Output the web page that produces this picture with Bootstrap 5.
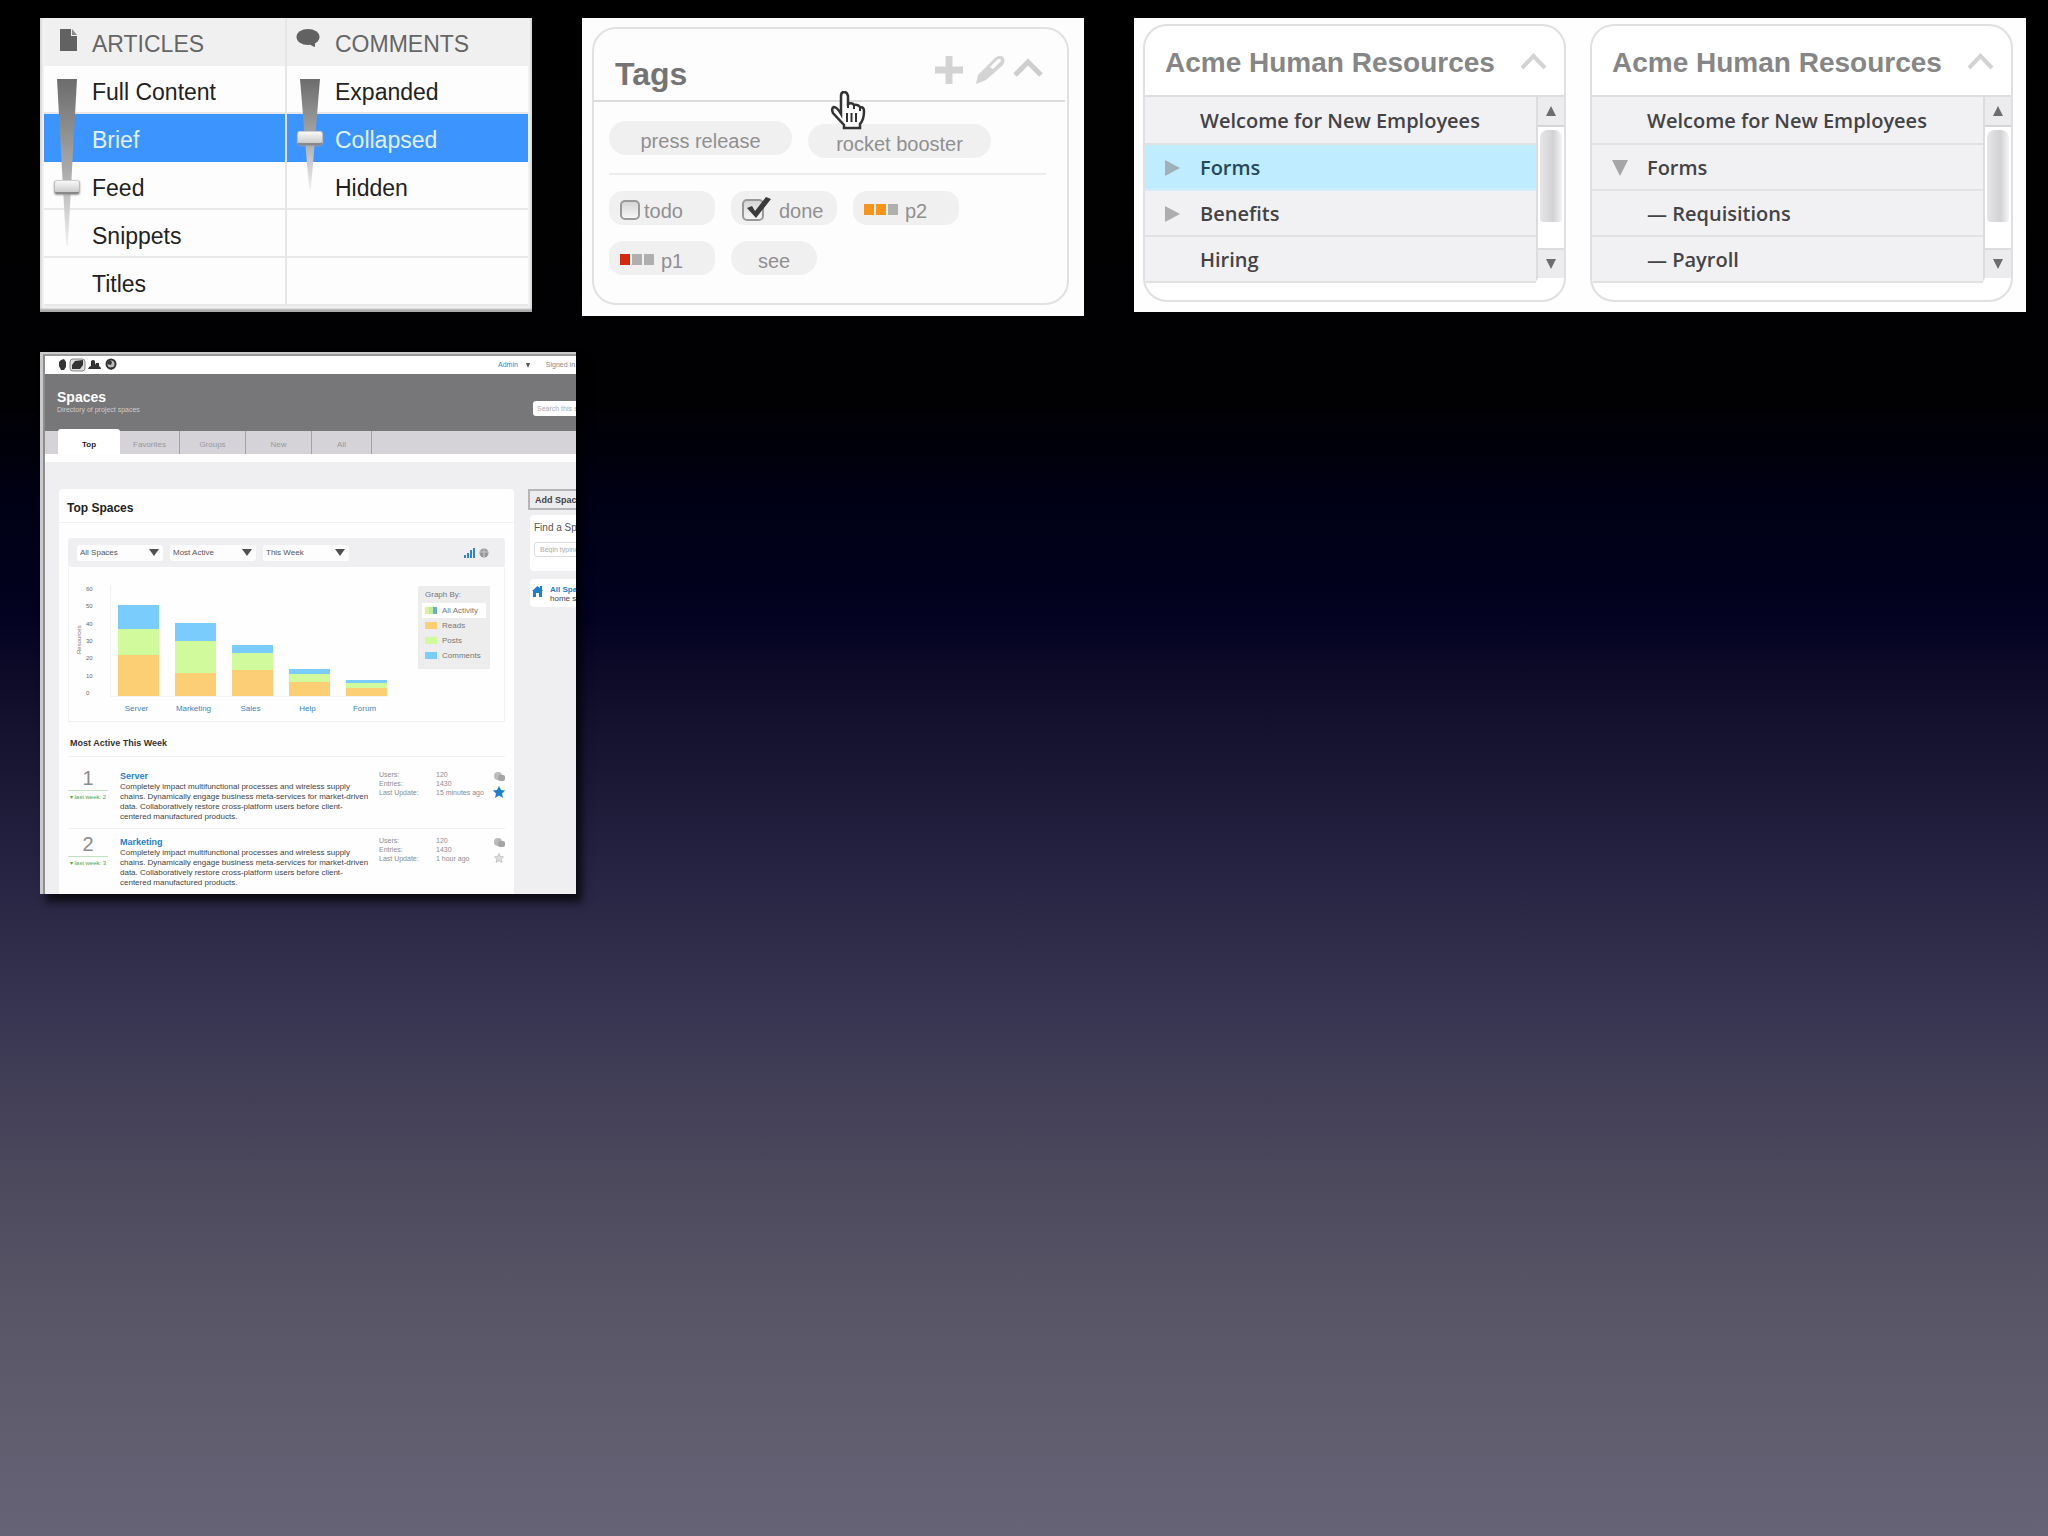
<!DOCTYPE html>
<html lang="en">
<head>
<meta charset="utf-8">
<meta name="viewport" content="width=device-width, initial-scale=1">
<title>Interface components</title>
<link href="https://cdn.jsdelivr.net/npm/bootstrap@5.3.0/dist/css/bootstrap.min.css" rel="stylesheet">
<style>
body{min-height:100vh;font-family:"Liberation Sans",Arial,sans-serif;
 background:linear-gradient(#000 0,#010103 26%,#000016 33%,#030220 40%,#120f2c 46%,#242240 56%,#383552 66%,#4b485c 76%,#595767 86%,#656375 100%) no-repeat}
button{font-family:inherit}
.board{padding:18px 22px 24px 40px}
.top-row{display:grid;grid-template-columns:492fr 502fr 892fr;gap:50px;align-items:start}
.pane-a{height:294px;background:#f1f1f1;padding:0 4px 6px;box-shadow:inset 0 -4px 2px -1px #aaa,inset 2px 0 1px #ddd,inset -2px 0 1px #ddd}
.pane-b{background:#fefdfe;padding:9px 15px 11px 10px}
.pane-c{height:294px;background:#fefefe;padding:6px 13px 10px 9px;gap:24px}

/* density picker */
.picker{flex:1 1 0;position:relative;background:#fdfdfd}
.picker + .picker{border-left:2px solid #e6e5e8}
.picker-head,.picker .opt{height:48px;padding:4px 0 0 48px;font-size:23px;line-height:44px;text-align:left;white-space:nowrap}
.picker-head{position:relative;background:#f0f0f0;color:#666;margin:0;font-weight:400}
.picker-head svg{position:absolute;left:15px;top:10px}
.picker-head .bubble{left:9px}
.picker .opt{display:block;width:100%;border:0;border-bottom:2px solid #e8e8ea;background:#fdfdfd;color:#222;border-radius:0}
.picker .opt.active{background:#3c95ff;color:#e2f1ff;border-color:#3c95ff}
.slider-box{position:absolute;left:10px;top:61px;width:27px;height:167px}
.slider-box.is-short{height:111px}
.slider-box::before{content:"";position:absolute;left:3px;top:0;width:20px;height:100%;background:linear-gradient(#6c6c6c,#aaa 55%,#f2f2f2);clip-path:polygon(0 0,100% 0,54% 100%,46% 100%)}
.slider-box input{appearance:none;-webkit-appearance:none;position:absolute;left:27px;top:0;margin:0;width:167px;height:27px;background:transparent;transform:rotate(90deg);transform-origin:0 0}
.slider-box.is-short input{width:111px}
.slider-box input::-webkit-slider-thumb{-webkit-appearance:none;width:14px;height:26px;border-radius:3px;border:1px solid #bbb;border-left-color:#ccc;border-right:2px solid #888;background:linear-gradient(90deg,#f8f8f8,#ccc);box-shadow:1px 0 2px #999}

/* tag box */
.tagbox{position:relative;height:278px;border:2px solid #e2e1e2;border-radius:24px;padding-right:2px}
.tagbox-head{height:73px;border-bottom:2px solid #dddcdd;padding:0 22px 0 21px}
.tagbox-head h2{font-size:32px;line-height:40px;font-weight:700;color:#757475;margin:25px 0 0}
.tools{padding-top:10px}
.tool{border:0;background:none;padding:0;line-height:0}
.tag-body{padding:19px 19px 0 15px}
.tag-row{gap:16px}
.tag{height:34px;border:0;border-radius:14px;background:#f1f0f1;color:#908f90;font-size:20px;line-height:24px;padding:6px 0 0;white-space:nowrap;display:flex;align-items:center}
.tag-wide{width:183px;border-radius:17px;justify-content:center}
.tag-drop{margin-top:3px;padding-top:5px}
.tag-mid{width:106px;padding-left:11px}
.tag-see{width:86px;border-radius:17px;justify-content:center}
.tag-body hr{margin:15px 0 16px;border:0;border-top:2px solid #eeebed;opacity:1}
.tick{appearance:none;-webkit-appearance:none;width:20px;height:20px;margin:0 4px 2px 0;border:2px solid #9a999a;border-radius:5px;background:linear-gradient(#d5d5d5,#f6f6f6)}
.tick-on{position:relative;width:30px;height:28px;margin:0 7px 6px 0;flex:none}
.tick-on .tick{position:absolute;left:0;top:5px;margin:0;width:22px;height:22px}
.tick-on svg{position:absolute;left:0;top:0;pointer-events:none}
.pips{display:flex;gap:2px;margin-right:7px;margin-bottom:4px}
.pips i{width:10px;height:11px;background:#b0afb0}
.pips .amber{background:#f7941d}
.pips .red{background:#d4290f}
.hand{position:absolute;left:236px;top:62px}

/* resource lists */
.hr-card{flex:1 1 0;height:278px;border:2px solid #e0dfe1;border-radius:24px;overflow:hidden;background:#fff}
.hr-head{height:71px;border-bottom:2px solid #dedde0;padding:0 17px 0 20px}
.hr-head h2{font-size:28px;line-height:34px;font-weight:700;color:#868686;margin:5px 0 0;white-space:nowrap}
.hr-list{flex:1 1 auto;border-radius:0 0 6px 0;border-right:2px solid #dcdbde}
.hr-list a{height:46px;border-bottom:2px solid #e2e1e4;background:#f1f0f2;color:#444346;font:600 20px/44px "Open Sans","Noto Sans",sans-serif;padding:1px 0 0 20px;text-decoration:none;white-space:nowrap;display:flex;align-items:center}
.hr-list a:first-child{height:48px;padding-top:2px}
.hr-list a.on{background:#bfecff;color:#26495a;border-color:#d3eefa}
.caret{width:16px;flex:none;margin-right:19px;line-height:0}
.scrollbar{width:26px;height:181px;background:#f2f1f3;display:flex;flex-direction:column}
.scrollbar button{border:0;background:#ecebed;height:28px;padding:0;line-height:0}
.scrollbar .groove{flex:1;background:#fff;padding:3px 2px 0;border-top:2px solid #d5d4d7;border-bottom:2px solid #dcdbde}
.scrollbar .grip{height:92px;border-radius:8px 8px 4px 4px;background:linear-gradient(90deg,#e6e5e7,#d2d1d4 60%,#f4f4f5)}

/* spaces application window */
.win{width:100%;max-width:536px;height:542px;margin-top:36px;background:#efeef1;border-left:3px solid #c9c9c9;border-top:2px solid #ccc;overflow:hidden;box-shadow:6px 8px 8px rgba(0,0,0,.7)}
.win-in{border-left:2px solid #8e8e90;border-top:2px solid #999;height:100%}
.bar-top{height:18px;background:#fff;padding-left:13px;font-size:7px;white-space:nowrap;color:#888;position:relative}
.bar-top .account{position:absolute;left:453px;top:0;height:18px;gap:8px}
.bar-top a{color:#1e88d8;text-decoration:none}
.hero{height:57px;background:#777678;color:#fff;padding:15px 0 0 12px}
.hero h1{font-size:14px;line-height:16px;font-weight:700;margin:0}
.hero p{font-size:7px;line-height:10px;margin:0;color:#ccc}
.hero input{width:43px;height:15px;margin-top:12px;border:0;border-radius:3px 0 0 3px;font-size:7px;padding:0 0 0 4px;background:#fff}
input::placeholder{color:#aaa}
.tabs{height:31px;background:linear-gradient(#d5d3d8 23px,#fdfdff 23px);padding-left:13px}
.tabs a{height:23px;font-size:8px;color:#98979b;text-decoration:none;display:flex;align-items:center;justify-content:center;padding-top:5px;width:66px;border-right:1px solid #a3a2a6}
.tabs a.on{margin-top:-2px;height:25px;width:62px;background:#fff;border:0;border-radius:3px 3px 0 0;color:#222;font-weight:700;padding-top:7px}
.tabs a.short{width:60px}
.cols{padding:27px 0 0 14px;gap:14px}
.sheet{flex:1 1 0;background:#fefefe;border-radius:4px 4px 0 0;min-width:0;padding:0 9px;height:440px}
.sheet h2{font-size:12px;line-height:14px;font-weight:700;color:#222;margin:0 -9px;padding:12px 0 7px 8px;border-bottom:1px solid #f1f1f4}
.filters{height:29px;margin-top:15px;background:#efeff1;border-radius:3px;padding:0 16px 0 9px;gap:7px}
.filters select{appearance:none;-webkit-appearance:none;height:16px;width:86px;border:0;border-radius:3px;background:#fdfdfd url("data:image/svg+xml,%3Csvg xmlns='http://www.w3.org/2000/svg' viewBox='0 0 10 7'%3E%3Cpath d='M0 0h10L5 7z' fill='%23505050'/%3E%3C/svg%3E") no-repeat right 4px center/10px 7px;font-size:8px;line-height:16px;padding:0 0 0 3px;color:#555;font-family:inherit}
.chartbox{height:155px;border:1px solid #f1f1f4;border-top:0;padding:18px 14px 0 6px}
.ylab{writing-mode:vertical-rl;transform:rotate(180deg);font-size:6px;line-height:8px;color:#777;height:110px;text-align:center}
.yticks{font-size:6px;line-height:8px;color:#666;width:30px;padding-left:3px;height:112px}
.plot{height:112px;margin-left:-3px;border-left:1px solid #f0f0f3;border-bottom:1px solid #f3f3f5;padding-left:7px;gap:16px}
.bar-col{width:41px;display:flex;flex-direction:column;justify-content:flex-end;height:111px;position:relative}
.bar-col a{position:absolute;top:119px;left:-10px;right:-6px;text-align:center;font-size:8px;line-height:10px;color:#3e86be;text-decoration:none}
.c-blue{background:#7accfc}.c-green{background:#d0fa9c}.c-gold{background:#fdcf74}
.key{width:72px;height:83px;background:#ededee;font-size:8px;line-height:10px;color:#777;padding:4px 4px 0;white-space:nowrap;margin:1px 0 0 auto}
.key b{font-weight:400;display:block;padding-left:3px;margin-bottom:3px}
.key span{display:flex;align-items:center;height:15px;padding-left:3px;gap:5px}
.key i{width:12px;height:7px}
.key .pick{background:#fff}
.key .mix{background:linear-gradient(90deg,#e3ee9a 0 35%,#b7f09b 35% 65%,#6fa8d0 65%)}
.sheet h3{font-size:9px;line-height:12px;font-weight:700;color:#333;margin:0;padding:15px 0 7px 2px;border-bottom:1px solid #f1f1f4}
.entry{height:72px;padding-top:13px;border-bottom:1px solid #f1f1f4}
.entry + .entry{padding-top:7px}
.rank{width:40px;text-align:center;color:#8c8c8e;font-size:20px;line-height:17px}
.rank small{display:block;margin-top:3px;border-top:1px solid #bfe3bf;font-size:6px;line-height:13px;color:#4da64d;white-space:nowrap}
.blurb{width:252px;margin-left:12px;font-size:8px;line-height:10px;color:#444}
.blurb a{display:block;font-size:9px;line-height:12px;font-weight:700;color:#1e80cf;text-decoration:none}
.blurb p{margin:0;white-space:nowrap}
.stats{display:grid;grid-template-columns:57px auto;font-size:7px;line-height:9px;color:#8d8d90;margin:0 0 0 7px;white-space:nowrap;align-content:start}
.stats dt,.stats dd{font-weight:400;margin:0}
.marks{margin-left:auto;width:12px;display:flex;flex-direction:column;gap:4px}
.marks button{border:0;background:none;padding:0;line-height:0;height:12px;text-align:left}
.side{width:48px;flex:none;overflow:hidden;white-space:nowrap}
.add{display:block;width:70px;height:21px;border:2px solid #b5b5b8;background:#ececee;font-size:9px;line-height:16px;font-weight:700;color:#444;padding:0 0 0 5px;text-align:left;border-radius:0}
.finder{margin:5px 0 8px 2px;height:56px;width:70px;background:#fff;border-radius:4px;padding:7px 0 0 4px;font-size:10px;line-height:12px;color:#555}
.finder label{display:block}
.finder input{display:block;width:62px;height:15px;margin-top:8px;border:1px solid #ddd;border-radius:3px;font-size:7px;padding:0 0 0 5px}
.homecard{margin-left:2px;width:70px;height:28px;background:#fff;border-radius:4px;padding:6px 0 0 2px;gap:7px;font-size:8px;line-height:9px;color:#444}
.homecard a{display:block;color:#1e80cf;font-weight:700;text-decoration:none}
</style>
<script src="https://cdn.jsdelivr.net/npm/bootstrap@5.3.0/dist/js/bootstrap.bundle.min.js"></script>
</head>
<body>
<main class="board">
 <div class="top-row">

  <section class="pane-a d-flex align-items-start" aria-label="Display density">
   <div class="picker">
    <h2 class="picker-head"><svg width="19" height="24" viewBox="0 0 19 24"><path d="M1 1h11v7h6v15H1z" fill="#626262"/><path d="M13 1l5 6h-5z" fill="#8a8a8a"/></svg>ARTICLES</h2>
    <button class="opt">Full Content</button>
    <button class="opt active">Brief</button>
    <button class="opt">Feed</button>
    <button class="opt">Snippets</button>
    <button class="opt">Titles</button>
    <div class="slider-box"><input type="range" min="0" max="100" value="66" aria-label="Article detail"></div>
   </div>
   <div class="picker">
    <h2 class="picker-head"><svg class="bubble" width="25" height="20" viewBox="0 0 25 20"><ellipse cx="12" cy="9" rx="11.500" ry="8" fill="#626262"/><path d="M13 14l6-1 0 6q-5-1-6-5z" fill="#626262"/></svg>COMMENTS</h2>
    <button class="opt">Expanded</button>
    <button class="opt active">Collapsed</button>
    <button class="opt">Hidden</button>
    <button class="opt" aria-label="Unused"></button>
    <button class="opt" aria-label="Unused"></button>
    <div class="slider-box is-short"><input type="range" min="0" max="100" value="54" aria-label="Comment detail"></div>
   </div>
  </section>

  <section class="pane-b">
   <div class="tagbox">
    <div class="tagbox-head d-flex justify-content-between">
     <h2>Tags</h2>
     <div class="tools d-flex align-items-center">
      <button class="tool me-2" aria-label="Add"><svg width="32" height="28" viewBox="0 0 32 28"><path d="M14 0v28M0 14h28" stroke="#d4d3d4" stroke-width="7"/></svg></button>
      <button class="tool me-2" aria-label="Edit"><svg width="30" height="30" viewBox="0 0 30 30"><path d="M1 29l2-9L20 3q5-4 8-1t0 8L11 25z" fill="#d4d3d4"/><path d="M15 12l8-8q3-1 3 2l-8 8z" fill="#fdfcfd"/></svg></button>
      <button class="tool" aria-label="Collapse"><svg width="30" height="24" viewBox="0 0 30 24"><path d="M2 17L15 4l13 13" fill="none" stroke="#cfcecf" stroke-width="5"/></svg></button>
     </div>
    </div>
    <div class="tag-body">
     <div class="tag-row d-flex">
      <button class="tag tag-wide">press release</button>
      <button class="tag tag-wide tag-drop">rocket booster</button>
     </div>
     <hr>
     <div class="tag-row d-flex mb-3">
      <label class="tag tag-mid"><input type="checkbox" class="tick">todo</label>
      <label class="tag tag-mid"><span class="tick-on"><input type="checkbox" class="tick" checked><svg width="30" height="28" viewBox="0 0 30 28"><path d="M5 14l5-2 3 5L24 3l5 2-15 19z" fill="#3c3b3c"/></svg></span>done</label>
      <button class="tag tag-mid"><span class="pips"><i class="amber"></i><i class="amber"></i><i></i></span>p2</button>
     </div>
     <div class="tag-row d-flex">
      <button class="tag tag-mid"><span class="pips"><i class="red"></i><i></i><i></i></span>p1</button>
      <button class="tag tag-see">see</button>
     </div>
    </div>
    <svg class="hand" width="36" height="40" viewBox="0 0 36 40"><path d="M11 23V5q0-4 3-4t4 4v8q4-2 6 1 4-1 6 2 4 0 4 4 0 9-4 13v4H14v-3L3 22q-2-5 1-6 3 0 7 7z" fill="#fff" stroke="#333" stroke-width="2.500"/><path d="M17 22v9M21.500 22v9M26 22v9" stroke="#333" stroke-width="2"/><path d="M18 13v4M24 14v4M30 16v4" stroke="#333" stroke-width="2"/></svg>
   </div>
  </section>

  <section class="pane-c d-flex">
   <div class="hr-card">
    <div class="hr-head d-flex align-items-center justify-content-between">
     <h2>Acme Human Resources</h2>
     <button class="tool" aria-label="Collapse"><svg width="27" height="18" viewBox="0 0 27 18"><path d="M2 16L13.500 4 25 16" fill="none" stroke="#d3d2d4" stroke-width="4"/></svg></button>
    </div>
    <div class="d-flex align-items-start">
     <nav class="hr-list">
      <a href="#"><span class="caret"></span>Welcome for New Employees</a>
      <a href="#" class="on"><span class="caret"><svg width="15" height="16"><path d="M0 0l15 8L0 16z" fill="#9fb0b8"/></svg></span>Forms</a>
      <a href="#"><span class="caret"><svg width="15" height="16"><path d="M0 0l15 8L0 16z" fill="#adacaf"/></svg></span>Benefits</a>
      <a href="#"><span class="caret"></span>Hiring</a>
     </nav>
     <div class="scrollbar">
      <button aria-label="Scroll up"><svg width="10" height="10"><path d="M5 0l5 10H0z" fill="#6d6c70"/></svg></button>
      <div class="groove"><div class="grip"></div></div>
      <button aria-label="Scroll down"><svg width="10" height="10"><path d="M0 0h10L5 10z" fill="#6d6c70"/></svg></button>
     </div>
    </div>
   </div>
   <div class="hr-card">
    <div class="hr-head d-flex align-items-center justify-content-between">
     <h2>Acme Human Resources</h2>
     <button class="tool" aria-label="Collapse"><svg width="27" height="18" viewBox="0 0 27 18"><path d="M2 16L13.500 4 25 16" fill="none" stroke="#d3d2d4" stroke-width="4"/></svg></button>
    </div>
    <div class="d-flex align-items-start">
     <nav class="hr-list">
      <a href="#"><span class="caret"></span>Welcome for New Employees</a>
      <a href="#"><span class="caret"><svg width="16" height="16"><path d="M0 0h16L8 16z" fill="#a5a4a7"/></svg></span>Forms</a>
      <a href="#"><span class="caret"></span>— Requisitions</a>
      <a href="#"><span class="caret"></span>— Payroll</a>
     </nav>
     <div class="scrollbar">
      <button aria-label="Scroll up"><svg width="10" height="10"><path d="M5 0l5 10H0z" fill="#6d6c70"/></svg></button>
      <div class="groove"><div class="grip"></div></div>
      <button aria-label="Scroll down"><svg width="10" height="10"><path d="M0 0h10L5 10z" fill="#6d6c70"/></svg></button>
     </div>
    </div>
   </div>
  </section>
 </div>

 <section class="win">
  <div class="win-in">
   <div class="bar-top d-flex align-items-center">
    <svg width="60" height="16" viewBox="0 0 60 16"><path d="M1 5l2-2 3-1 2 3v5l-2 3H3L1 9z" fill="#333"/><rect x="12" y="2" width="15" height="12" rx="3" fill="#ddd" stroke="#888"/><path d="M14 8l3-4 8-1v5l-3 4h-8z" fill="#333"/><path d="M30 12q1-3 3-3V4q2-2 4 0v4l1-2h3v3q2 1 2 3z" fill="#333"/><circle cx="53" cy="7" r="4.500" fill="#bbb" stroke="#333" stroke-width="2"/><path d="M49 7l2-4 3 2-1 3zM52 12l2-2 2 1-3 2z" fill="#333"/></svg>
    <div class="account d-flex align-items-center"><a href="#">Admin</a><svg width="4" height="5"><path d="M0 0h4L2 5z" fill="#555"/></svg><span class="ms-2">Signed in as</span></div>
   </div>
   <header class="hero d-flex justify-content-between align-items-start">
    <div><h1>Spaces</h1><p>Directory of project spaces</p></div>
    <input type="text" placeholder="Search this space" aria-label="Search this space">
   </header>
   <nav class="tabs d-flex"><a href="#" class="on">Top</a><a href="#" class="short">Favorites</a><a href="#">Groups</a><a href="#">New</a><a href="#" class="short">All</a></nav>
   <div class="cols d-flex align-items-start">
    <article class="sheet">
     <h2>Top Spaces</h2>
     <div class="filters d-flex align-items-center">
      <select aria-label="Spaces"><option>All Spaces</option></select>
      <select aria-label="Order"><option>Most Active</option></select>
      <select aria-label="Period"><option>This Week</option></select>
      <svg class="ms-auto" width="25" height="12" viewBox="0 0 25 12"><path d="M0 8h2v3H0zM3 6h2v5H3zM6 3h2v8H6zM9 1h2v10H9z" fill="#2f83d0"/><circle cx="20" cy="6" r="4.500" fill="#999"/><path d="M16 5h8M20 2v8" stroke="#ccc"/></svg>
     </div>
     <div class="chartbox d-flex align-items-start">
      <div class="ylab">Resources</div>
      <div class="yticks d-flex flex-column justify-content-between"><span>60</span><span>50</span><span>40</span><span>30</span><span>20</span><span>10</span><span>0</span></div>
      <div class="plot d-flex align-items-end">
       <div class="bar-col"><div class="c-blue" style="height:24px"></div><div class="c-green" style="height:26px"></div><div class="c-gold" style="height:41px"></div><a href="#">Server</a></div>
       <div class="bar-col"><div class="c-blue" style="height:18px"></div><div class="c-green" style="height:32px"></div><div class="c-gold" style="height:23px"></div><a href="#">Marketing</a></div>
       <div class="bar-col"><div class="c-blue" style="height:8px"></div><div class="c-green" style="height:17px"></div><div class="c-gold" style="height:26px"></div><a href="#">Sales</a></div>
       <div class="bar-col"><div class="c-blue" style="height:5px"></div><div class="c-green" style="height:8px"></div><div class="c-gold" style="height:14px"></div><a href="#">Help</a></div>
       <div class="bar-col"><div class="c-blue" style="height:3px"></div><div class="c-green" style="height:5px"></div><div class="c-gold" style="height:8px"></div><a href="#">Forum</a></div>
      </div>
      <div class="key"><b>Graph By:</b><span class="pick"><i class="mix"></i>All Activity</span><span><i class="c-gold"></i>Reads</span><span><i class="c-green"></i>Posts</span><span><i class="c-blue"></i>Comments</span></div>
     </div>
     <h3>Most Active This Week</h3>
     <div class="entry d-flex">
      <div class="rank">1<small>▾ last week: 2</small></div>
      <div class="blurb"><a href="#">Server</a><p>Completely impact multifunctional processes and wireless supply<br>chains. Dynamically engage business meta-services for market-driven<br>data. Collaboratively restore cross-platform users before client-<br>centered manufactured products.</p></div>
      <dl class="stats"><dt>Users:</dt><dd>120</dd><dt>Entries:</dt><dd>1430</dd><dt>Last Update:</dt><dd>15 minutes ago</dd></dl>
      <div class="marks"><button aria-label="Watch"><svg width="12" height="11"><circle cx="5" cy="5" r="4" fill="#bbb"/><rect x="5" y="4" width="7" height="6" rx="2" fill="#a5a5a8"/></svg></button><button aria-label="Favorite"><svg width="12" height="12" viewBox="0 0 12 12"><path d="M6 0l2 4 4 .400-3 3 1 4.600-4-2.500L2 12l1-4.600-3-3L4 4z" fill="#1c7fd0"/></svg></button></div>
     </div>
     <div class="entry d-flex">
      <div class="rank">2<small>▾ last week: 3</small></div>
      <div class="blurb"><a href="#">Marketing</a><p>Completely impact multifunctional processes and wireless supply<br>chains. Dynamically engage business meta-services for market-driven<br>data. Collaboratively restore cross-platform users before client-<br>centered manufactured products.</p></div>
      <dl class="stats"><dt>Users:</dt><dd>120</dd><dt>Entries:</dt><dd>1430</dd><dt>Last Update:</dt><dd>1 hour ago</dd></dl>
      <div class="marks"><button aria-label="Watch"><svg width="12" height="11"><circle cx="5" cy="5" r="4" fill="#bbb"/><rect x="5" y="4" width="7" height="6" rx="2" fill="#a5a5a8"/></svg></button><button aria-label="Favorite"><svg width="12" height="12" viewBox="-2 -2 16 16"><path d="M6 0l2 4 4 .400-3 3 1 4.600-4-2.500L2 12l1-4.600-3-3L4 4z" fill="#ddd" stroke="#bbb"/></svg></button></div>
     </div>
    </article>
    <aside class="side">
     <button class="add">Add Space</button>
     <div class="finder"><label for="find">Find a Space</label><input id="find" type="text" placeholder="Begin typing"></div>
     <div class="homecard d-flex"><svg width="11" height="12" viewBox="0 0 11 12"><path d="M0 6l5.500-5L8 3V1h2v4l1 1H10v6H7V8H4v4H1V6z" fill="#1c7fd0"/></svg><div><a href="#">All Spaces</a>home space</div></div>
    </aside>
   </div>
  </div>
 </section>
</main>
</body>
</html>
